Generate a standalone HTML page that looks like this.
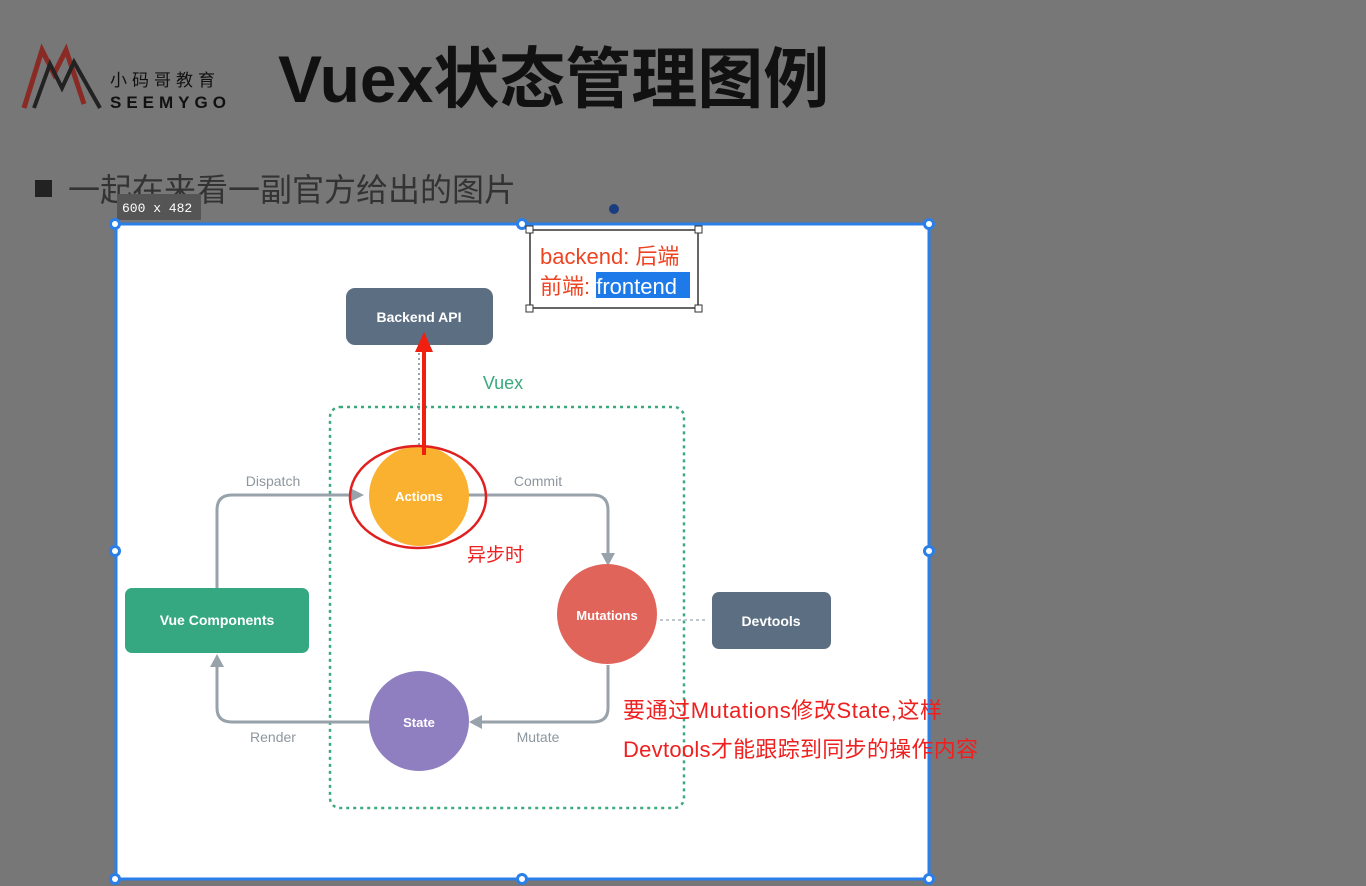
<!DOCTYPE html>
<html><head><meta charset="utf-8"><style>
body{margin:0;width:1366px;height:886px;background:#777777;overflow:hidden;position:relative;font-family:"Liberation Sans","Noto Sans CJK SC",sans-serif}
.a{position:absolute}
</style></head><body>
<svg class="a" style="left:0;top:0" width="1366" height="886">
<!-- logo -->
<path d="M24 108 L42 50 L54 74 L66 50 L84 104" stroke="#8a2a24" stroke-width="5" fill="none"/>
<path d="M34 108 L50 64 L62 88 L74 62 L100 108" stroke="#222" stroke-width="4" fill="none"/>
<text x="110" y="86" font-size="17" fill="#111" letter-spacing="5" font-family="Noto Sans CJK SC,sans-serif">小码哥教育</text>
<text x="110" y="108" font-size="17" fill="#111" letter-spacing="5" font-weight="bold">SEEMYGO</text>
<text x="278" y="102" font-size="66" font-weight="bold" fill="#111" font-family="Liberation Sans,Noto Sans CJK SC,sans-serif">Vuex状态管理图例</text>
<rect x="35" y="180" width="17" height="17" fill="#222"/>
<text x="68" y="201" font-size="32" fill="#333" font-family="Noto Sans CJK SC,sans-serif">一起在来看一副官方给出的图片</text>
<rect x="117" y="194" width="84" height="26" fill="#555"/>
<text x="122" y="212" font-size="13" fill="#fff" font-family="Liberation Mono,monospace">600 x 482</text>
<!-- white image -->
<rect x="116" y="224" width="813" height="655" fill="#fff" stroke="#2a7fe8" stroke-width="3"/>
<g fill="#2a7fe8"><circle cx="115" cy="224" r="6"/><circle cx="522" cy="224" r="6"/><circle cx="929" cy="224" r="6"/><circle cx="115" cy="551" r="6"/><circle cx="929" cy="551" r="6"/><circle cx="115" cy="879" r="6"/><circle cx="522" cy="879" r="6"/><circle cx="929" cy="879" r="6"/></g>
<g fill="#fff"><circle cx="115" cy="224" r="3"/><circle cx="522" cy="224" r="3"/><circle cx="929" cy="224" r="3"/><circle cx="115" cy="551" r="3"/><circle cx="929" cy="551" r="3"/><circle cx="115" cy="879" r="3"/><circle cx="522" cy="879" r="3"/><circle cx="929" cy="879" r="3"/></g>
<circle cx="614" cy="209" r="5" fill="#1a3d80"/>
<!-- text box -->
<rect x="530" y="230" width="168" height="78" fill="#fff" stroke="#333" stroke-width="1.5"/>
<g fill="#fff" stroke="#333"><rect x="526" y="226" width="7" height="7"/><rect x="695" y="226" width="7" height="7"/><rect x="526" y="305" width="7" height="7"/><rect x="695" y="305" width="7" height="7"/></g>
<text x="540" y="264" font-size="22" fill="#ee4422" font-family="Liberation Sans,Noto Sans CJK SC,sans-serif">backend: 后端</text>
<rect x="596" y="272" width="94" height="26" fill="#1e7ae8"/>
<text x="540" y="294" font-size="22" fill="#ee4422" font-family="Liberation Sans,Noto Sans CJK SC,sans-serif">前端: <tspan fill="#fff">frontend</tspan></text>
<!-- diagram -->
<rect x="346" y="288" width="147" height="57" rx="9" fill="#5c6f82"/>
<text x="419" y="322" font-size="14" fill="#fff" text-anchor="middle" font-weight="bold">Backend API</text>
<text x="503" y="389" font-size="18" fill="#3aa97c" text-anchor="middle">Vuex</text>
<rect x="330" y="407" width="354" height="401" rx="10" fill="none" stroke="#3aa97c" stroke-width="2.5" stroke-dasharray="3 4"/>
<g stroke="#98a2ab" stroke-width="3" fill="none">
<path d="M217 588 V510 Q217 495 232 495 H355"/>
<path d="M468 495 H593 Q608 495 608 510 V555"/>
<path d="M608 665 V708 Q608 722 593 722 H480"/>
<path d="M370 722 H232 Q217 722 217 708 V665"/>
<path d="M419 445 V350" stroke-dasharray="2 3" stroke-width="2"/>
<path d="M660 620 H705" stroke="#c0c8cf" stroke-dasharray="3 3" stroke-width="2"/>
</g>
<g fill="#98a2ab"><path d="M350 488 L364 495 L350 502Z"/><path d="M601 553 L608 566 L615 553Z"/><path d="M482 715 L469 722 L482 729Z"/><path d="M210 667 L217 654 L224 667Z"/></g>
<text x="273" y="486" font-size="14" fill="#8e969e" text-anchor="middle">Dispatch</text>
<text x="538" y="486" font-size="14" fill="#8e969e" text-anchor="middle">Commit</text>
<text x="538" y="742" font-size="14" fill="#8e969e" text-anchor="middle">Mutate</text>
<text x="273" y="742" font-size="14" fill="#8e969e" text-anchor="middle">Render</text>
<circle cx="419" cy="496" r="50" fill="#fbb130"/>
<text x="419" y="501" font-size="13" fill="#fff" text-anchor="middle" font-weight="bold">Actions</text>
<ellipse cx="418" cy="497" rx="68" ry="51" fill="none" stroke="#e02020" stroke-width="2.5"/>
<path d="M424 455 V345" stroke="#f01f10" stroke-width="4"/>
<path d="M415 352 L424 332 L433 352Z" fill="#f01f10"/>
<circle cx="607" cy="614" r="50" fill="#e0645a"/>
<text x="607" y="620" font-size="13" fill="#fff" text-anchor="middle" font-weight="bold">Mutations</text>
<circle cx="419" cy="721" r="50" fill="#8f7fc0"/>
<text x="419" y="727" font-size="13" fill="#fff" text-anchor="middle" font-weight="bold">State</text>
<rect x="125" y="588" width="184" height="65" rx="7" fill="#35a882"/>
<text x="217" y="625" font-size="14" fill="#fff" text-anchor="middle" font-weight="bold">Vue Components</text>
<rect x="712" y="592" width="119" height="57" rx="7" fill="#5c6f82"/>
<text x="771" y="626" font-size="14" fill="#fff" text-anchor="middle" font-weight="bold">Devtools</text>
<text x="467" y="561" font-size="19" fill="#ee2020" font-family="Noto Sans CJK SC,sans-serif">异步时</text>
<text x="623" y="718" font-size="22" fill="#ee2020" textLength="319" font-family="Liberation Sans,Noto Sans CJK SC,sans-serif">要通过Mutations修改State,这样</text>
<text x="623" y="757" font-size="22" fill="#ee2020" textLength="355" font-family="Liberation Sans,Noto Sans CJK SC,sans-serif">Devtools才能跟踪到同步的操作内容</text>
</svg>
</body></html>
